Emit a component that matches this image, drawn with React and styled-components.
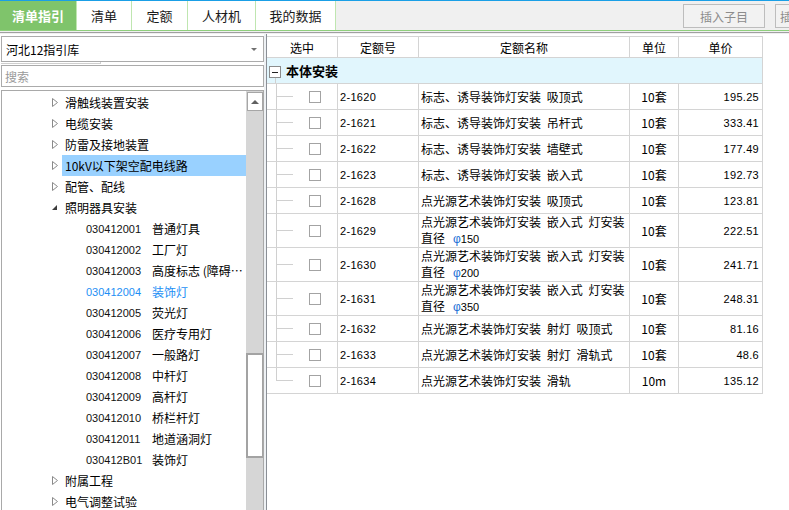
import React from 'react';
import styled, { createGlobalStyle } from 'styled-components';

const Global = createGlobalStyle`
  html, body { margin: 0; padding: 0; background: #fff; }
  body { font-family: "Liberation Sans", "Noto Sans CJK SC", sans-serif; font-size: 12px; color: #000; }
  * { box-sizing: border-box; }
`;

const CJK = `"Noto Sans CJK SC", "Liberation Sans", sans-serif`;
const NUM = `"Liberation Sans", "Noto Sans CJK SC", sans-serif`;

const Root = styled.div`
  width: 789px;
  height: 510px;
  overflow: hidden;
  display: flex;
  flex-direction: column;
`;

const TopBar = styled.div`
  height: 34px;
  flex: none;
  background: #f0f0f0;
  border-top: 1px solid #1a9fe6;
  display: flex;
  flex-direction: column;
`;

const TopRow = styled.div`
  height: 30px;
  display: flex;
  align-items: stretch;
  border-bottom: 1px solid #8fcf7d;
`;

const TopRule = styled.div`
  margin-top: 1px;
  height: 1px;
  background: #a0a0a0;
`;

const Tab = styled.div`
  width: ${p => p.$w}px;
  display: flex;
  align-items: center;
  justify-content: center;
  font-family: ${CJK};
  font-size: 13px;
  line-height: 1;
  background: ${p => (p.$active ? '#7fc46b' : '#fff')};
  color: ${p => (p.$active ? '#fff' : '#1a1a1a')};
  font-weight: ${p => (p.$active ? 700 : 400)};
  border-right: 1px solid #bfe6b0;
`;

const Spacer = styled.div`
  flex: 1;
`;

const ToolButton = styled.div`
  margin-top: 3px;
  height: 24px;
  width: ${p => p.$w}px;
  flex: none;
  border: 1px solid #bdbdbd;
  border-right-width: ${p => (p.$cut ? 0 : 1)}px;
  background: #f2f2f2;
  color: #8c8c8c;
  font-family: ${CJK};
  font-size: 12px;
  display: flex;
  align-items: center;
  justify-content: ${p => (p.$cut ? 'flex-start' : 'center')};
  padding-left: ${p => (p.$cut ? 4 : 0)}px;
  margin-left: ${p => p.$ml}px;
  overflow: hidden;
  white-space: nowrap;
`;

const Main = styled.div`
  flex: 1;
  display: flex;
  min-height: 0;
`;

const LeftPanel = styled.div`
  width: 264px;
  flex: none;
  padding: 2px 0 0 1px;
  display: flex;
  flex-direction: column;
`;

const Select = styled.div`
  height: 26px;
  border: 1px solid #ababab;
  background: #fff;
  display: flex;
  align-items: center;
  padding: 0 4px;
  font-family: ${CJK};
  font-size: 12px;
`;

const SelectText = styled.span`
  flex: 1;
`;

const Caret = styled.span`
  width: 0;
  height: 0;
  border-left: 3px solid transparent;
  border-right: 3px solid transparent;
  border-top: 3px solid #707070;
  margin-right: 2px;
`;

const HRemnant = styled.div`
  height: 3px;
  display: flex;
`;

const HRemnantBar = styled.div`
  width: 100px;
  height: 2px;
  border-bottom: 1px solid #cfcfcf;
  border-right: 1px solid #cfcfcf;
`;

const Search = styled.div`
  height: 22px;
  border: 1px solid #ababab;
  background: #fff;
  display: flex;
  align-items: center;
  padding: 0 3px;
  font-family: ${CJK};
  font-size: 12px;
  color: #9a9a9a;
`;

const TreeBox = styled.div`
  margin-top: 3px;
  flex: 1;
  min-height: 0;
  border: 1px solid #a9a9a9;
  border-bottom: none;
  display: flex;
  background: #fff;
`;

const TreeList = styled.div`
  flex: 1;
  padding-top: 1px;
  overflow: hidden;
`;

const TreeRow = styled.div`
  height: 21px;
  display: flex;
  align-items: center;
  padding-left: ${p => p.$indent}px;
`;

const Arrow = styled.svg`
  width: 8px;
  height: 9px;
  flex: none;
  margin-right: 3px;
`;

const NodeLabel = styled.div`
  flex: 1;
  height: 21px;
  display: flex;
  align-items: center;
  padding-left: 3px;
  font-family: ${CJK};
  font-size: 12px;
  background: ${p => (p.$hl ? '#99d1ff' : 'transparent')};
`;

const Code = styled.span`
  width: 66px;
  flex: none;
  font-family: ${NUM};
  font-size: 11px;
  color: ${p => (p.$sel ? '#1e8ff5' : '#111')};
`;

const LeafName = styled.span`
  font-family: ${CJK};
  font-size: 12px;
  color: ${p => (p.$sel ? '#1e8ff5' : '#000')};
  white-space: nowrap;
`;

const ScrollTrack = styled.div`
  width: 17px;
  flex: none;
  background: #d6d6d6;
  display: flex;
  flex-direction: column;
  padding-top: 1px;
`;

const ScrollBtn = styled.div`
  height: 19px;
  margin-left: 1px;
  background: #fff;
  border: 1px solid #a6a6a6;
  display: flex;
  align-items: center;
  justify-content: center;
`;

const UpTri = styled.span`
  width: 0;
  height: 0;
  border-left: 4px solid transparent;
  border-right: 4px solid transparent;
  border-bottom: 4px solid #606060;
`;

const Thumb = styled.div`
  margin-top: 242px;
  height: 105px;
  background: #fff;
  border: 2px solid #a3a3a3;
  border-right-width: 1px;
`;

const Splitter = styled.div`
  width: 2px;
  flex: none;
  background: #eef1f4;
`;

const RightPanel = styled.div`
  flex: 1;
  border-left: 1px solid #8a8f96;
  background: #fff;
  padding-top: 2px;
`;

const Table = styled.div`
  width: 496px;
  display: flex;
  flex-direction: column;
`;

const cols = '71px 81px 211px 49px 84px';

const HeadRow = styled.div`
  display: grid;
  grid-template-columns: ${cols};
  height: 22px;
  border-top: 1px solid #d4d4d4;
  border-bottom: 1px solid #d4d4d4;
`;

const HeadCell = styled.div`
  border-right: 1px solid #d4d4d4;
  display: flex;
  align-items: center;
  justify-content: center;
  font-family: ${CJK};
  font-size: 12px;
`;

const GroupRow = styled.div`
  height: 26px;
  background: #e1f6fd;
  border-bottom: 1px solid #d4d4d4;
  border-right: 1px solid #d4d4d4;
  display: flex;
  align-items: stretch;
  padding-left: 2px;
`;

const ExpCol = styled.div`
  width: 12px;
  display: flex;
  flex-direction: column;
  padding-top: 8px;
`;

const ExpBox = styled.div`
  width: 12px;
  height: 12px;
  border: 1px solid #8c8c8c;
  background: #fff;
  display: flex;
  align-items: center;
  justify-content: center;
`;

const ExpDash = styled.span`
  width: 6px;
  height: 1px;
  background: #222;
`;

const Stem = styled.div`
  flex: 1;
  margin-left: 6px;
  border-left: 1px solid #d0d0d0;
`;

const GroupTitle = styled.div`
  margin-left: 5px;
  display: flex;
  align-items: center;
  font-family: ${CJK};
  font-size: 13px;
  font-weight: 700;
`;

const DataRow = styled.div`
  display: grid;
  grid-template-columns: ${cols};
  height: ${p => p.$h}px;
  border-bottom: 1px solid #d4d4d4;
`;

const Cell = styled.div`
  border-right: 1px solid #d4d4d4;
  display: flex;
  align-items: center;
  justify-content: ${p => p.$align || 'flex-start'};
  padding: ${p => (p.$align === 'flex-end' ? '0 3px 0 0' : p.$align === 'center' ? '0' : '0 0 0 2px')};
  font-family: ${p => (p.$num ? NUM : CJK)};
  font-size: ${p => (p.$num ? 11 : 12)}px;
  letter-spacing: ${p => (p.$num ? '0.3px' : '0')};
  word-spacing: 3px;
  white-space: nowrap;
  overflow: hidden;
`;

const SelCell = styled.div`
  border-right: 1px solid #d4d4d4;
  display: flex;
  align-items: center;
`;

const Conn = styled.div`
  width: 17px;
  margin-left: 9px;
  align-self: stretch;
  display: flex;
  flex-direction: column;
`;

const ConnTop = styled.div`
  flex: 1;
  border-left: 1px solid #d0d0d0;
  border-bottom: 1px solid #d0d0d0;
`;

const ConnBottom = styled.div`
  flex: 1;
  border-left: 1px solid ${p => (p.$last ? 'transparent' : '#d0d0d0')};
`;

const Check = styled.span`
  width: 12px;
  height: 12px;
  margin-left: 16px;
  border: 1px solid #a3a3a3;
  background: #fff;
`;

const NameLines = styled.div`
  display: flex;
  flex-direction: column;
  line-height: 16px;
`;

const Phi = styled.span`
  color: #1b6fd6;
  margin-left: 8px;
  font-family: ${NUM};
`;

const Small = styled.span`
  font-family: ${NUM};
  font-size: 11px;
`;

const tabs = [
  { t: '清单指引', w: 77, active: true },
  { t: '清单', w: 55 },
  { t: '定额', w: 56 },
  { t: '人材机', w: 68 },
  { t: '我的数据', w: 80 },
];

const tree = [
  { t: '滑触线装置安装' },
  { t: '电缆安装' },
  { t: '防雷及接地装置' },
  { t: '10kV以下架空配电线路', hl: true },
  { t: '配管、配线' },
  { t: '照明器具安装', open: true },
  { c: '030412001', t: '普通灯具' },
  { c: '030412002', t: '工厂灯' },
  { c: '030412003', t: '高度标志 (障碍…' },
  { c: '030412004', t: '装饰灯', sel: true },
  { c: '030412005', t: '荧光灯' },
  { c: '030412006', t: '医疗专用灯' },
  { c: '030412007', t: '一般路灯' },
  { c: '030412008', t: '中杆灯' },
  { c: '030412009', t: '高杆灯' },
  { c: '030412010', t: '桥栏杆灯' },
  { c: '030412011', t: '地道涵洞灯' },
  { c: '030412B01', t: '装饰灯' },
  { t: '附属工程' },
  { t: '电气调整试验' },
];

const rows = [
  { code: '2-1620', name: '标志、诱导装饰灯安装 吸顶式', unit: '10套', price: '195.25' },
  { code: '2-1621', name: '标志、诱导装饰灯安装 吊杆式', unit: '10套', price: '333.41' },
  { code: '2-1622', name: '标志、诱导装饰灯安装 墙壁式', unit: '10套', price: '177.49' },
  { code: '2-1623', name: '标志、诱导装饰灯安装 嵌入式', unit: '10套', price: '192.73' },
  { code: '2-1628', name: '点光源艺术装饰灯安装 吸顶式', unit: '10套', price: '123.81' },
  { code: '2-1629', name: '点光源艺术装饰灯安装 嵌入式 灯安装', dia: '150', unit: '10套', price: '222.51' },
  { code: '2-1630', name: '点光源艺术装饰灯安装 嵌入式 灯安装', dia: '200', unit: '10套', price: '241.71' },
  { code: '2-1631', name: '点光源艺术装饰灯安装 嵌入式 灯安装', dia: '350', unit: '10套', price: '248.31' },
  { code: '2-1632', name: '点光源艺术装饰灯安装 射灯 吸顶式', unit: '10套', price: '81.16' },
  { code: '2-1633', name: '点光源艺术装饰灯安装 射灯 滑轨式', unit: '10套', price: '48.6' },
  { code: '2-1634', name: '点光源艺术装饰灯安装 滑轨', unit: '10m', price: '135.12' },
];

function NodeArrow({ open }) {
  return (
    <Arrow viewBox="0 0 8 9">
      {open ? (
        <polygon points="6,2 6,7 1,7" fill="#3c3c3c" />
      ) : (
        <polygon points="1.5,0.5 6.5,4.5 1.5,8.5" fill="#fff" stroke="#8a8a8a" strokeWidth="1" />
      )}
    </Arrow>
  );
}

export default function App() {
  return (
    <Root>
      <Global />
      <TopBar>
        <TopRow>
          {tabs.map(t => (
            <Tab key={t.t} $w={t.w} $active={t.active}>{t.t}</Tab>
          ))}
          <Spacer />
          <ToolButton $w={82} $ml={0}>插入子目</ToolButton>
          <ToolButton $w={14} $ml={10} $cut>插</ToolButton>
        </TopRow>
        <TopRule />
      </TopBar>
      <Main>
        <LeftPanel>
          <Select>
            <SelectText>河北12指引库</SelectText>
            <Caret />
          </Select>
          <HRemnant><HRemnantBar /></HRemnant>
          <Search>搜索</Search>
          <TreeBox>
            <TreeList>
              {tree.map((n, i) =>
                n.c ? (
                  <TreeRow key={i} $indent={84}>
                    <Code $sel={n.sel}>{n.c}</Code>
                    <LeafName $sel={n.sel}>{n.t}</LeafName>
                  </TreeRow>
                ) : (
                  <TreeRow key={i} $indent={49}>
                    <NodeArrow open={n.open} />
                    <NodeLabel $hl={n.hl}>{n.t}</NodeLabel>
                  </TreeRow>
                )
              )}
            </TreeList>
            <ScrollTrack>
              <ScrollBtn><UpTri /></ScrollBtn>
              <Thumb />
            </ScrollTrack>
          </TreeBox>
        </LeftPanel>
        <Splitter />
        <RightPanel>
          <Table>
            <HeadRow>
              <HeadCell>选中</HeadCell>
              <HeadCell>定额号</HeadCell>
              <HeadCell>定额名称</HeadCell>
              <HeadCell>单位</HeadCell>
              <HeadCell>单价</HeadCell>
            </HeadRow>
            <GroupRow>
              <ExpCol>
                <ExpBox><ExpDash /></ExpBox>
                <Stem />
              </ExpCol>
              <GroupTitle>本体安装</GroupTitle>
            </GroupRow>
            {rows.map((r, i) => (
              <DataRow key={r.code} $h={r.dia ? 34 : 26}>
                <SelCell>
                  <Conn>
                    <ConnTop />
                    <ConnBottom $last={i === rows.length - 1} />
                  </Conn>
                  <Check />
                </SelCell>
                <Cell $num>{r.code}</Cell>
                <Cell>
                  {r.dia ? (
                    <NameLines>
                      <span>{r.name}</span>
                      <span>直径<Phi>φ</Phi><Small>{r.dia}</Small></span>
                    </NameLines>
                  ) : (
                    r.name
                  )}
                </Cell>
                <Cell $align="center">{r.unit}</Cell>
                <Cell $num $align="flex-end">{r.price}</Cell>
              </DataRow>
            ))}
          </Table>
        </RightPanel>
      </Main>
    </Root>
  );
}
